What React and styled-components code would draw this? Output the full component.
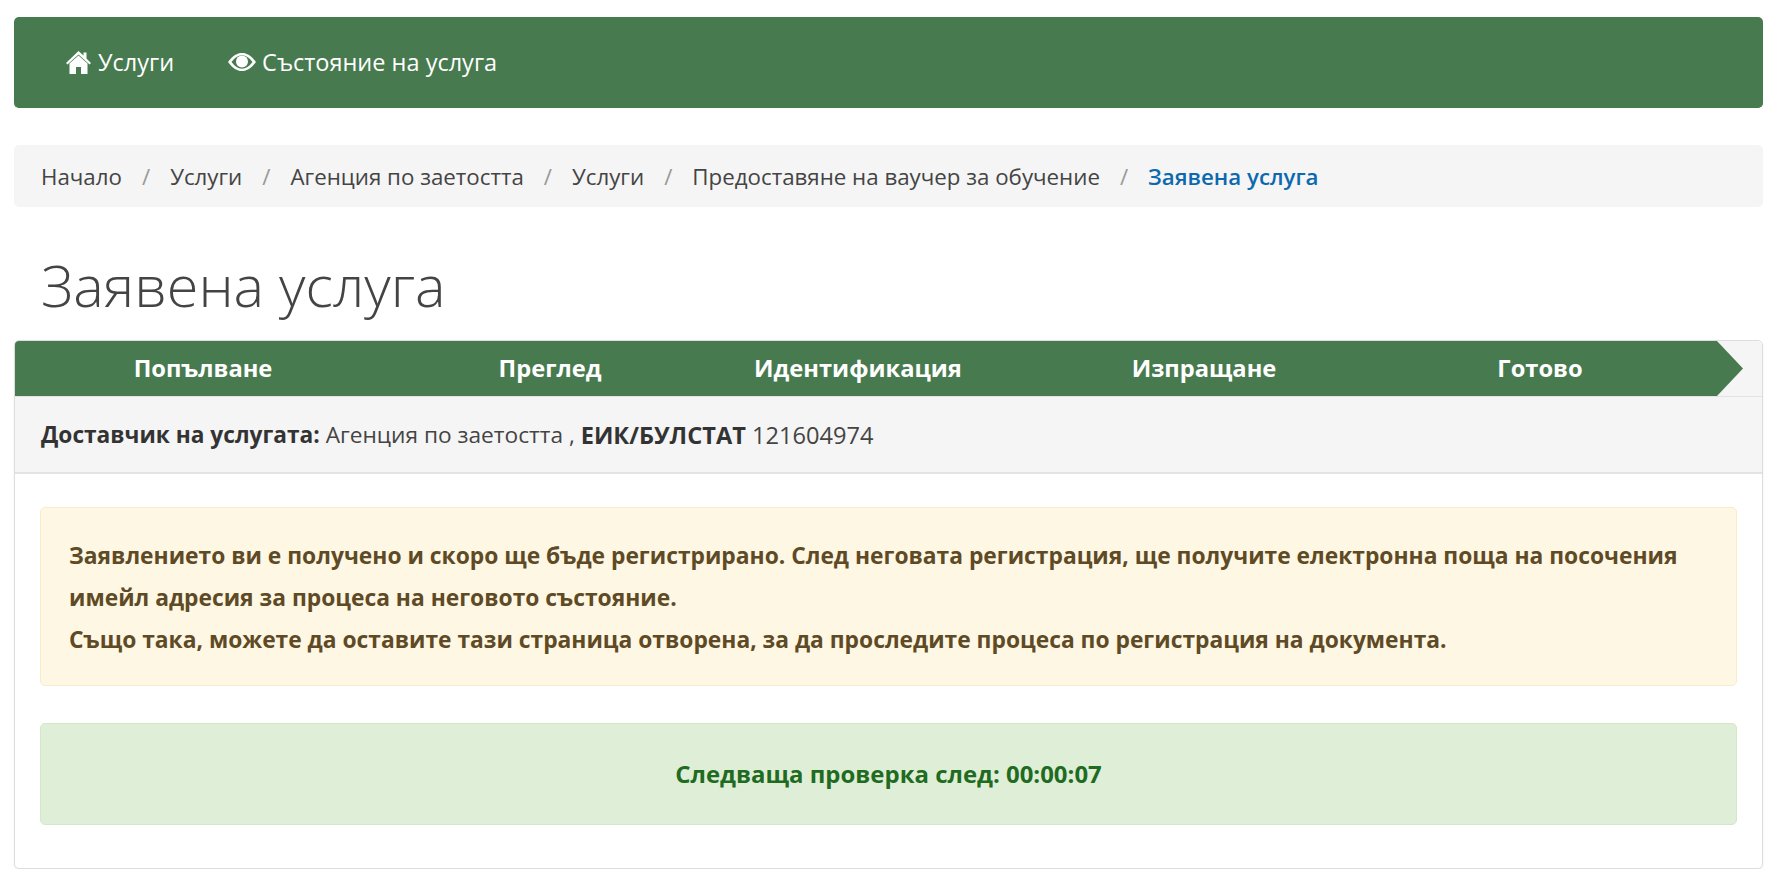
import React from 'react';
import styled, { createGlobalStyle } from 'styled-components';

const GlobalStyle = createGlobalStyle`
  html, body {
    margin: 0;
    padding: 0;
    background: #fff;
  }

  body {
    font-family: 'Open Sans', 'Noto Sans', sans-serif;
    color: #333;
  }
`;

const Page = styled.div`
  padding: 17px 14px 0 14px;
`;

const Navbar = styled.nav`
  display: flex;
  align-items: center;
  height: 91px;
  padding-left: 52px;
  gap: 54px;
  background: #487a4f;
  border-bottom: 1px solid #3f8048;
  border-radius: 5px;
  box-sizing: border-box;
  margin-bottom: 37px;
`;

const NavLink = styled.a`
  display: flex;
  align-items: center;
  gap: ${(p) => p.$gap}px;
  font-size: 23.5px;
  color: #fff;
  text-decoration: none;
`;

const Breadcrumb = styled.ol`
  display: flex;
  align-items: center;
  height: 62px;
  margin: 0 0 39px;
  padding: 0 0 0 27px;
  list-style: none;
  background: #f5f5f5;
  border-radius: 5px;
  font-size: 22.3px;
`;

const Crumb = styled.li`
  color: ${(p) => (p.$active ? '#0c69ad' : '#444')};
  font-weight: ${(p) => (p.$active ? 600 : 400)};

  &:not(:first-child)::before {
    content: '/';
    color: #999;
    padding: 0 20px;
    font-weight: 400;
  }
`;

const Title = styled.h1`
  margin: 0 0 16px 27px;
  font-size: 57.6px;
  line-height: 78px;
  font-weight: 300;
  color: #444;
`;

const Panel = styled.section`
  border: 1px solid #ddd;
  border-radius: 5px;
  box-shadow: 0 1px 2px rgba(0, 0, 0, 0.08);
  overflow: hidden;
`;

const Steps = styled.div`
  background: #f5f5f5;
  border-bottom: 1px solid #e3e3e3;
`;

const StepBar = styled.div`
  display: grid;
  grid-template-columns: 376px 318px 298px 394px 278px;
  width: 1728px;
  height: 55px;
  padding-bottom: 2px;
  box-sizing: border-box;
  align-items: center;
  background: #487a4f;
  clip-path: polygon(0 0, 1702px 0, 100% 50%, 1702px 100%, 0 100%);
`;

const Step = styled.div`
  text-align: center;
  font-size: 23.7px;
  font-weight: 700;
  color: #fff;
`;

const Provider = styled.div`
  height: 77px;
  display: flex;
  align-items: center;
  padding-left: 26px;
  background: #f5f5f5;
  border-bottom: 2px solid #e3e3e3;
  box-sizing: border-box;
  font-size: 22.7px;
  color: #444;
  white-space: pre;

  b {
    color: #333;
  }
`;

const ProviderId = styled.span`
  font-size: 23.6px;
`;

const PanelBody = styled.div`
  padding: 33px 25px 43px;
`;

const Alert = styled.div`
  border-radius: 5px;
  font-weight: 700;
  box-sizing: border-box;
`;

const WarningAlert = styled(Alert)`
  height: 179px;
  padding: 27px 27px 26px 28px;
  margin-bottom: 37px;
  font-size: 22.8px;
  line-height: 42px;
  background: #fdf7e3;
  border: 1px solid #faecc8;
  color: #5f4a26;
`;

const SuccessAlert = styled(Alert)`
  height: 102px;
  padding-bottom: 2px;
  display: flex;
  align-items: center;
  justify-content: center;
  font-size: 23.95px;
  background: #dfeed7;
  border: 1px solid #d3e8c9;
  color: #1f6b21;
`;

const HomeIcon = () => (
  <svg width="25" height="23" viewBox="0 0 25 23" fill="#fff" aria-hidden="true">
    <path d="M12.5 0 L17.5 4.5 V1.5 H20.5 V7.5 L25 12 L23.5 13.5 L12.5 3.5 L1.5 13.5 L0 12 Z" />
    <path d="M12.5 4.5 L21.5 12.5 V23 H15 V16 H10 V23 H3.5 V12.5 Z" />
  </svg>
);

const EyeIcon = () => (
  <svg width="28" height="18" viewBox="0 0 28 18" aria-hidden="true">
    <path
      fill="#fff"
      fillRule="evenodd"
      d="M0 9 C5 2.5 9 0 14 0 S23 2.5 28 9 C23 15.5 19 18 14 18 S5 15.5 0 9 Z M3.5 9 C7 13.5 10 15.8 14 15.8 S21 13.5 24.5 9 C21 4.5 18 2.2 14 2.2 S7 4.5 3.5 9 Z"
    />
    <circle cx="14" cy="8.5" r="6" fill="#fff" />
  </svg>
);

const stepNames = ['Попълване', 'Преглед', 'Идентификация', 'Изпращане', 'Готово'];

const crumbs = [
  'Начало',
  'Услуги',
  'Агенция по заетостта',
  'Услуги',
  'Предоставяне на ваучер за обучение',
];

export default function App() {
  return (
    <Page>
      <GlobalStyle />
      <Navbar>
        <NavLink href="#" $gap={7}>
          <HomeIcon />
          Услуги
        </NavLink>
        <NavLink href="#" $gap={6}>
          <EyeIcon />
          Състояние на услуга
        </NavLink>
      </Navbar>
      <Breadcrumb>
        {crumbs.map((c, i) => (
          <Crumb key={i}>{c}</Crumb>
        ))}
        <Crumb $active>Заявена услуга</Crumb>
      </Breadcrumb>
      <Title>Заявена услуга</Title>
      <Panel>
        <Steps>
          <StepBar>
            {stepNames.map((s) => (
              <Step key={s}>{s}</Step>
            ))}
          </StepBar>
        </Steps>
        <Provider>
          <b>Доставчик на услугата:</b> Агенция по заетостта , <ProviderId><b>ЕИК/БУЛСТАТ</b> 121604974</ProviderId>
        </Provider>
        <PanelBody>
          <WarningAlert>
            Заявлението ви е получено и скоро ще бъде регистрирано. След неговата регистрация, ще получите електронна поща на посочения имейл адресия за процеса на неговото състояние.
            <br />
            Също така, можете да оставите тази страница отворена, за да проследите процеса по регистрация на документа.
          </WarningAlert>
          <SuccessAlert>Следваща проверка след: 00:00:07</SuccessAlert>
        </PanelBody>
      </Panel>
    </Page>
  );
}
